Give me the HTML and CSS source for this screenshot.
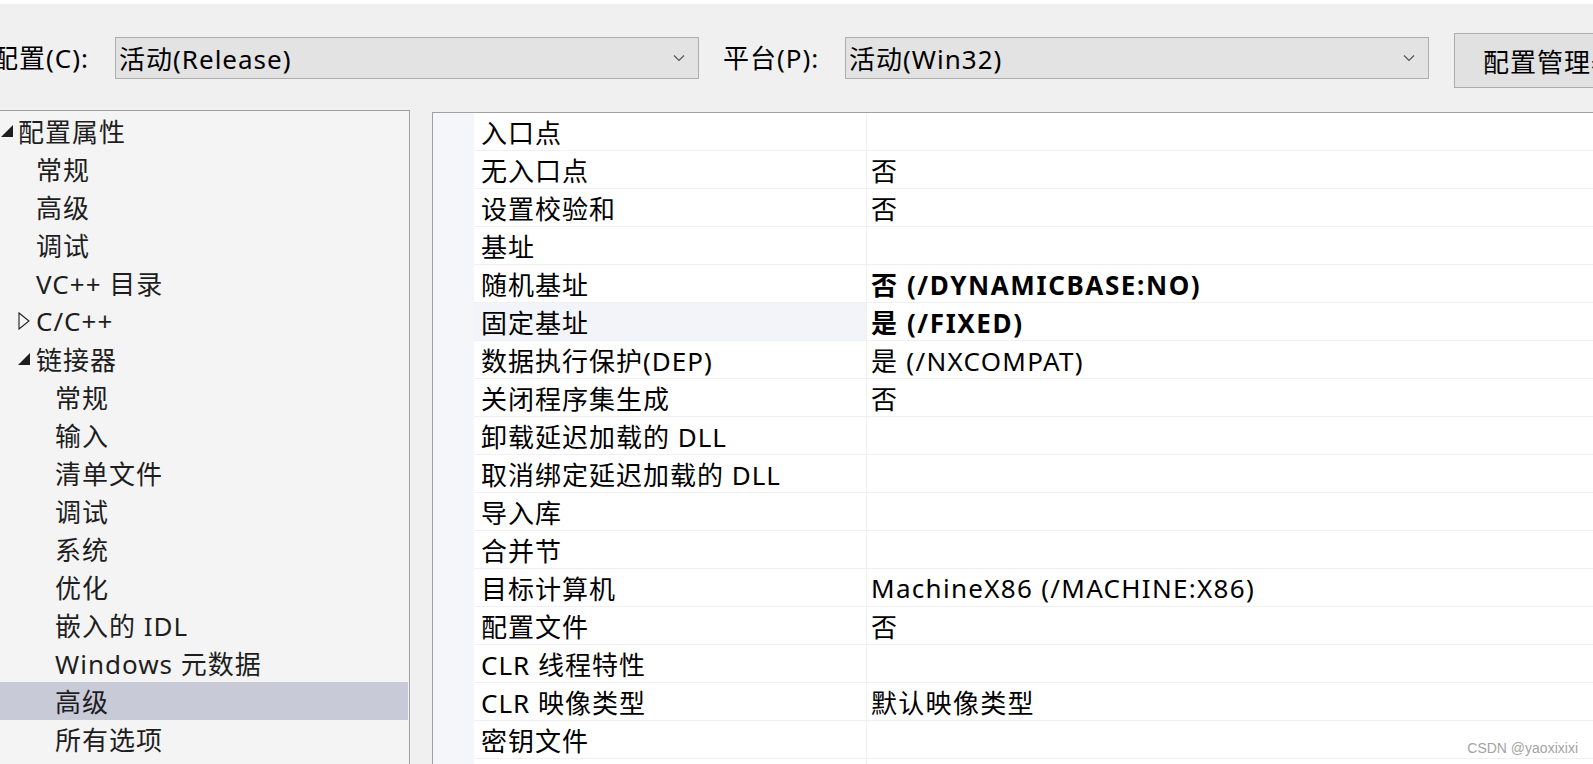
FILE: index.html
```html
<!DOCTYPE html>
<html lang="zh-CN">
<head>
    <meta charset="UTF-8">
    <title>属性页</title>
    <link rel="stylesheet" href="styles.css">
</head>
<body>
    <div class="dialog">
        <!-- 顶部配置栏 -->
        <div class="toolbar">
            <div class="tb-label first">配置(C):</div>
            <div class="combo">
                <span class="combo-text">活动(Release)</span>
                <svg class="chevron" width="12" height="8" viewBox="0 0 12 8"><path d="M1 1.5L6 6.5L11 1.5" fill="none" stroke="#555" stroke-width="1.2"/></svg>
            </div>
            <div class="tb-label second">平台(P):</div>
            <div class="combo">
                <span class="combo-text">活动(Win32)</span>
                <svg class="chevron" width="12" height="8" viewBox="0 0 12 8"><path d="M1 1.5L6 6.5L11 1.5" fill="none" stroke="#555" stroke-width="1.2"/></svg>
            </div>
            <div class="tb-button">配置管理器...</div>
        </div>

        <div class="main">
            <!-- 左侧树 -->
            <div class="tree">
                <div class="tree-row lvl0">
                    <span class="exp"><svg width="12" height="12" viewBox="0 0 12 12"><path d="M12 0V12H0Z" fill="#1e1e1e"/></svg></span>
                    <span class="label">配置属性</span>
                </div>
                <div class="tree-row lvl1"><span class="exp"></span><span class="label">常规</span></div>
                <div class="tree-row lvl1"><span class="exp"></span><span class="label">高级</span></div>
                <div class="tree-row lvl1"><span class="exp"></span><span class="label">调试</span></div>
                <div class="tree-row lvl1"><span class="exp"></span><span class="label">VC++ 目录</span></div>
                <div class="tree-row lvl1">
                    <span class="exp"><svg width="12" height="18" viewBox="0 0 12 18"><path d="M1 1L11 9L1 17Z" fill="none" stroke="#1e1e1e" stroke-width="1.1"/></svg></span>
                    <span class="label">C/C++</span>
                </div>
                <div class="tree-row lvl1">
                    <span class="exp"><svg width="12" height="12" viewBox="0 0 12 12"><path d="M12 0V12H0Z" fill="#1e1e1e"/></svg></span>
                    <span class="label">链接器</span>
                </div>
                <div class="tree-row lvl2"><span class="exp"></span><span class="label">常规</span></div>
                <div class="tree-row lvl2"><span class="exp"></span><span class="label">输入</span></div>
                <div class="tree-row lvl2"><span class="exp"></span><span class="label">清单文件</span></div>
                <div class="tree-row lvl2"><span class="exp"></span><span class="label">调试</span></div>
                <div class="tree-row lvl2"><span class="exp"></span><span class="label">系统</span></div>
                <div class="tree-row lvl2"><span class="exp"></span><span class="label">优化</span></div>
                <div class="tree-row lvl2"><span class="exp"></span><span class="label">嵌入的 IDL</span></div>
                <div class="tree-row lvl2"><span class="exp"></span><span class="label">Windows 元数据</span></div>
                <div class="tree-row lvl2 selected"><span class="exp"></span><span class="label">高级</span></div>
                <div class="tree-row lvl2"><span class="exp"></span><span class="label">所有选项</span></div>
                <div class="tree-row lvl2"><span class="exp"></span><span class="label"></span></div>
            </div>

            <!-- 右侧属性表 -->
            <div class="grid">
                <div class="gutter"></div>
                <div class="rows">
                    <div class="prop"><div class="name">入口点</div><div class="value"></div></div>
                    <div class="prop"><div class="name">无入口点</div><div class="value">否</div></div>
                    <div class="prop"><div class="name">设置校验和</div><div class="value">否</div></div>
                    <div class="prop"><div class="name">基址</div><div class="value"></div></div>
                    <div class="prop"><div class="name">随机基址</div><div class="value bold">否 (/DYNAMICBASE:NO)</div></div>
                    <div class="prop current"><div class="name">固定基址</div><div class="value bold">是 (/FIXED)</div></div>
                    <div class="prop"><div class="name">数据执行保护(DEP)</div><div class="value">是 (/NXCOMPAT)</div></div>
                    <div class="prop"><div class="name">关闭程序集生成</div><div class="value">否</div></div>
                    <div class="prop"><div class="name">卸载延迟加载的 DLL</div><div class="value"></div></div>
                    <div class="prop"><div class="name">取消绑定延迟加载的 DLL</div><div class="value"></div></div>
                    <div class="prop"><div class="name">导入库</div><div class="value"></div></div>
                    <div class="prop"><div class="name">合并节</div><div class="value"></div></div>
                    <div class="prop"><div class="name">目标计算机</div><div class="value">MachineX86 (/MACHINE:X86)</div></div>
                    <div class="prop"><div class="name">配置文件</div><div class="value">否</div></div>
                    <div class="prop"><div class="name">CLR 线程特性</div><div class="value"></div></div>
                    <div class="prop"><div class="name">CLR 映像类型</div><div class="value">默认映像类型</div></div>
                    <div class="prop"><div class="name">密钥文件</div><div class="value"></div></div>
                    <div class="prop"><div class="name"></div><div class="value"></div></div>
                </div>
            </div>
        </div>

        <div class="watermark">CSDN @yaoxixixi</div>
    </div>
</body>
</html>
```

FILE: styles.css
```css
* {
    margin: 0;
    padding: 0;
    box-sizing: border-box;
}

body {
    background-color: #fff;
    color: #000;
    font-family: 'Noto Sans', 'Noto Sans CJK SC', sans-serif;
    font-size: 26px;
    letter-spacing: 1px;
    overflow: hidden;
}

.dialog {
    width: 1593px;
    height: 764px;
    position: relative;
    overflow: hidden;
    background-color: #f0f0f0;
    border-top: 4px solid #fff;
}

/* 顶部栏 */
.toolbar {
    height: 106px;
    display: flex;
    align-items: center;
    white-space: nowrap;
}

.tb-label {
    flex: none;
    line-height: 42px;
    margin-top: 2px;
}

.tb-label.first {
    width: 123px;
    margin-left: -8px;
}

.tb-label.second {
    width: 146px;
    padding-left: 24px;
}

.combo {
    flex: none;
    width: 584px;
    height: 42px;
    margin-top: 2px;
    background-color: #e3e3e3;
    border: 1px solid #adadad;
    display: flex;
    align-items: center;
    padding: 0 13px 0 3px;
}

.combo-text {
    flex: 1;
}

.chevron {
    flex: none;
}

.tb-button {
    flex: none;
    margin-left: 25px;
    height: 55px;
    margin-top: 7px;
    padding: 0 40px 0 28px;
    background-color: #e1e1e1;
    border: 1px solid #adadad;
    display: flex;
    align-items: center;
}

/* 主区域 */
.main {
    display: flex;
    align-items: flex-start;
}

.tree {
    flex: none;
    width: 411px;
    height: 700px;
    margin-left: -1px;
    background-color: #f4f4f4;
    border: 1px solid #a0a0a0;
    padding-top: 1px;
    color: #1e1e1e;
}

.tree-row {
    height: 38px;
    display: flex;
    align-items: center;
    white-space: nowrap;
}

.tree-row.lvl0 { padding-left: 1px; }
.tree-row.lvl1 { padding-left: 19px; }
.tree-row.lvl2 { padding-left: 38px; }

.tree-row.selected {
    background-color: #c9cad7;
    margin-right: 1px;
}

.exp {
    width: 17px;
    flex: none;
    display: flex;
    align-items: center;
}

.lvl1 .exp svg {
    margin-left: -1px;
}

.grid {
    flex: none;
    margin-left: 22px;
    margin-top: 2px;
    width: 1200px;
    height: 700px;
    background-color: #fff;
    border: 1px solid #a0a0a0;
    display: flex;
}

.gutter {
    width: 41px;
    flex: none;
    background-color: #f4f6fa;
}

.rows {
    flex: 1;
}

.prop {
    height: 38px;
    display: flex;
    border-bottom: 1px solid #f0f0f0;
    white-space: nowrap;
}

.prop .name {
    width: 393px;
    flex: none;
    padding-left: 7px;
    display: flex;
    align-items: center;
    border-right: 1px solid #f0f0f0;
}

.prop .value {
    flex: 1;
    padding-left: 4px;
    display: flex;
    align-items: center;
    letter-spacing: 1.3px;
}

.prop.current .name {
    background-color: #f3f4f9;
}

.value.bold {
    font-weight: 700;
    letter-spacing: 1.6px;
}

.watermark {
    position: absolute;
    right: 15px;
    bottom: 8px;
    font-family: 'Liberation Sans', Arial, sans-serif;
    font-size: 14px;
    letter-spacing: 0;
    color: #a3a3a3;
}
```
